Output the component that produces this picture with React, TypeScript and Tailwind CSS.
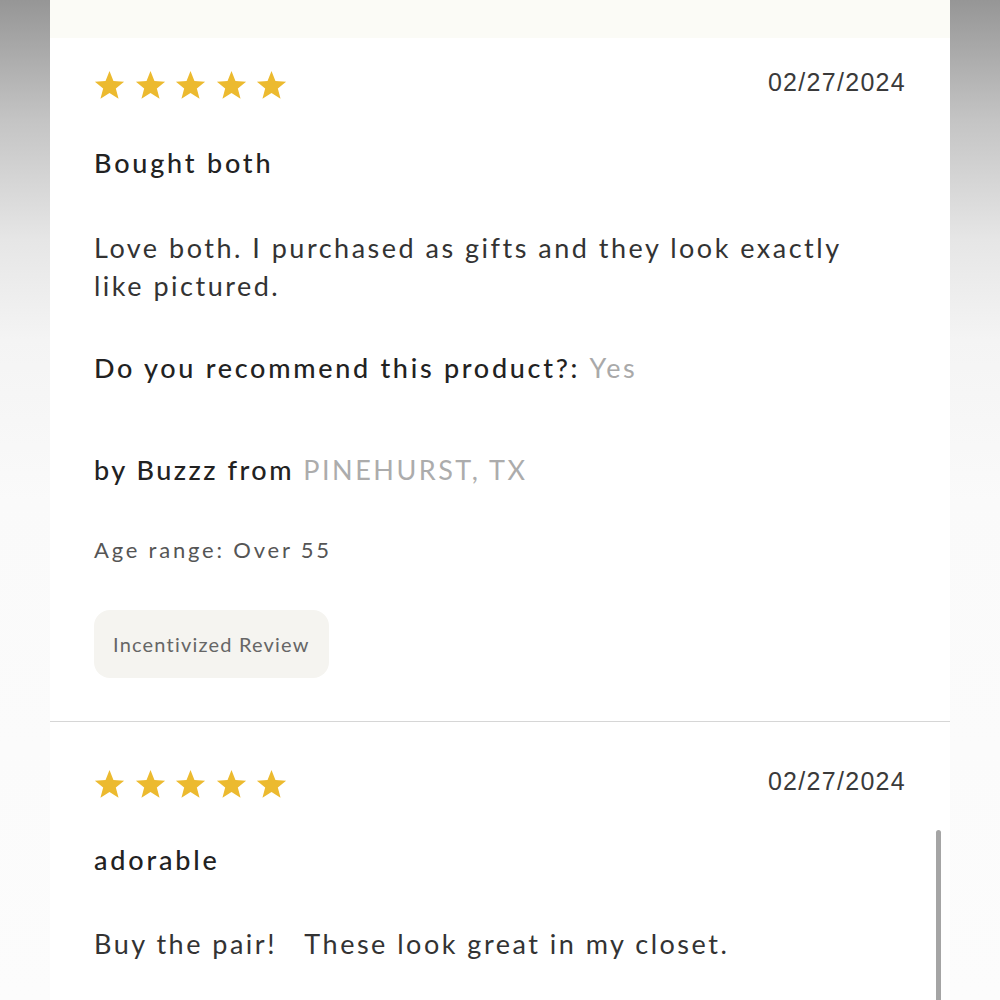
import React from 'react';

const Star: React.FC = () => (
  <svg viewBox="0 0 24 24" className="w-[31px] h-[31px]" fill="#ecba2f">
    <path d="M12 1.6l3.05 7.7 8.25.5-6.4 5.25 2.1 8.05L12 18.6l-7 4.5 2.1-8.05L.7 9.8l8.25-.5z" />
  </svg>
);

const Stars: React.FC = () => (
  <div className="flex items-center gap-[9.5px] h-[30px]">
    {[0, 1, 2, 3, 4].map((i) => (
      <Star key={i} />
    ))}
  </div>
);

const font = "font-['Lato','Noto_Sans',sans-serif]";

const ReviewHead: React.FC<{ date: string }> = ({ date }) => (
  <div className="flex items-center justify-between">
    <Stars />
    <span className="font-['Liberation_Sans',Arial,sans-serif] text-[25px] tracking-[1.3px] text-[#3a3a3a] -mt-[3px]">{date}</span>
  </div>
);

const App: React.FC = () => {
  return (
    <div className="min-h-screen h-[1000px] overflow-hidden bg-[linear-gradient(to_bottom,#969696_0%,#c4c4c4_12%,#e6e6e6_24%,#f4f4f4_34%,#fafafa_50%,#fcfcfc_100%)] px-[50px] relative">
      <div className={`bg-white h-full ${font}`}>
        <div className="h-[38px] bg-[#fbfbf6]"></div>

        <div className="px-[44px] pt-[29px] pb-[43px]">
          <ReviewHead date="02/27/2024" />
          <h3 className="mt-[42px] text-[27px] leading-[38px] font-medium text-[#222] tracking-[2.8px]">Bought both</h3>
          <p className="mt-[47px] text-[27px] leading-[38px] text-[#333] tracking-[2.5px] max-w-[790px]">
            Love both. I purchased as gifts and they look exactly like pictured.
          </p>
          <p className="mt-[44px] text-[27px] leading-[38px] font-medium text-[#222] tracking-[2.7px]">
            Do you recommend this product?: <span className="font-normal text-[#a9a9a9]">Yes</span>
          </p>
          <p className="mt-[64px] text-[27px] leading-[38px] font-medium text-[#222] tracking-[2.5px]">
            by Buzzz from <span className="font-normal text-[#acacac]">PINEHURST, TX</span>
          </p>
          <p className="mt-[46px] text-[22px] leading-[30px] text-[#555] tracking-[2.8px]">Age range: Over 55</p>
          <div className="mt-[45px] inline-flex items-center h-[68px] px-[19px] rounded-[16px] bg-[#f5f4f0] text-[20px] text-[#666] tracking-[1.2px]">
            Incentivized Review
          </div>
        </div>

        <div className="h-[1.5px] bg-[#d6d6d6]"></div>

        <div className="px-[44px] pt-[44px]">
          <ReviewHead date="02/27/2024" />
          <h3 className="mt-[40px] text-[27px] leading-[38px] font-medium text-[#222] tracking-[2.8px]">adorable</h3>
          <p className="mt-[46px] text-[27px] leading-[38px] text-[#333] tracking-[2.5px] whitespace-pre">
            Buy the pair!   These look great in my closet.
          </p>
        </div>
      </div>

      <div className="absolute left-[936px] top-[830px] w-[5px] h-[200px] rounded-full bg-[#a5a5a5]"></div>
    </div>
  );
};

export default App;
